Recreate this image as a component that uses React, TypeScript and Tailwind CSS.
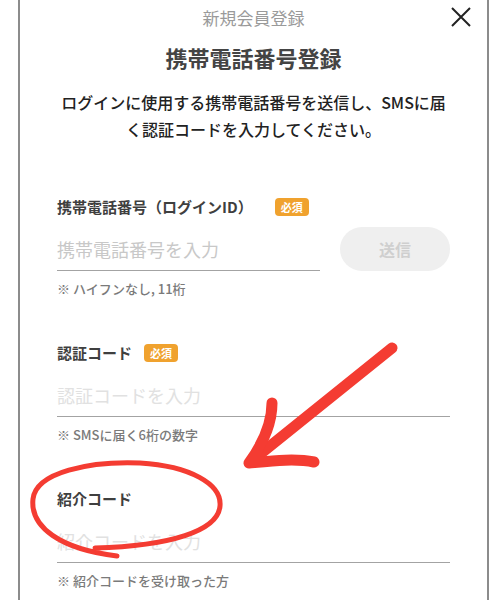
import React from "react";

const font = { fontFamily: '"Noto Sans CJK JP", "Noto Sans", sans-serif' };

function Badge({ wide }: { wide?: boolean }) {
  return (
    <span
      className={`${wide ? "ml-[22px]" : "ml-[12px]"} inline-flex h-[18px] items-center rounded-[4px] bg-[#f0a22e] px-[6px] text-[11px] font-bold leading-none text-white`}
    >
      必須
    </span>
  );
}

function Field({
  label,
  required,
  placeholder,
  note,
  light,
  button,
}: {
  label: string;
  required?: boolean;
  placeholder: string;
  note: string;
  light?: boolean;
  button?: boolean;
}) {
  return (
    <div className="flex flex-col">
      <div className="flex h-[22px] items-center">
        <span className="text-[15px] font-bold leading-[22px] text-[#3f3f3f]">{label}</span>
        {required && <Badge wide={button} />}
      </div>
      <div className="mt-[9px] flex h-[44px] items-end gap-[20px]">
        <div className="flex h-[44px] flex-1 items-center border-b border-[#a3a3a3]">
          <span className={`text-[18px] leading-none ${light ? "text-[#e1e1e1]" : "text-[#c8c8c8]"}`}>
            {placeholder}
          </span>
        </div>
        {button && (
          <button className="flex h-[44px] w-[110px] items-center justify-center rounded-full bg-[#efefef] text-[16px] font-bold text-[#cfcfcf]">
            送信
          </button>
        )}
      </div>
      <p className="mt-[9px] text-[13px] font-medium leading-[18px] text-[#7a7a7a]">{note}</p>
    </div>
  );
}

export default function App() {
  return (
    <div className="relative h-[600px] w-[500px] overflow-hidden bg-white" style={font}>
      <div className="ml-[18px] h-full w-[471px] border-x-2 border-[#8c8c8c] px-[37px]">
        <div className="relative pt-[6px] text-center">
          <h2 className="text-[17px] leading-[24px] text-[#9a9a9a]">新規会員登録</h2>
          <button className="absolute right-[-21px] top-[7px] text-[#222]">
            <svg width="20" height="20" viewBox="0 0 20 20" fill="none" stroke="currentColor" strokeWidth="2">
              <path d="M1 1 L19 19 M19 1 L1 19" />
            </svg>
          </button>
          <h1 className="mt-[12px] text-[22px] font-bold leading-[30px] text-[#444]">携帯電話番号登録</h1>
          <p className="mt-[17px] text-[16px] font-medium leading-[27px] text-[#222]">
            ログインに使用する携帯電話番号を送信し、SMSに届
            <br />
            く認証コードを入力してください。
          </p>
        </div>

        <div className="mt-[53px] flex flex-col gap-[44px]">
          <Field
            label="携帯電話番号（ログインID）"
            required
            placeholder="携帯電話番号を入力"
            note="※ ハイフンなし, 11桁"
            button
          />
          <Field label="認証コード" required placeholder="認証コードを入力" note="※ SMSに届く6桁の数字" light />
          <Field label="紹介コード" placeholder="紹介コードを入力" note="※ 紹介コードを受け取った方" light />
        </div>
      </div>

      {/* red annotation marks */}
      <svg className="pointer-events-none absolute left-0 top-0" width="500" height="600" viewBox="0 0 500 600" fill="none">
        <g stroke="#f43c32" strokeLinecap="round" strokeLinejoin="round">
          <path d="M392 348 L254 459" strokeWidth="11" />
          <path d="M272 403 C 272 425, 262 445, 249 463 C 270 461, 295 458, 314 462" strokeWidth="11" />
          <path
            d="M117 556 C 60 549, 30 527, 33 499 C 36 472, 90 461, 140 463 C 190 466, 222 484, 220 506 C 218 531, 170 546, 95 548"
            strokeWidth="5"
          />
        </g>
      </svg>
    </div>
  );
}
